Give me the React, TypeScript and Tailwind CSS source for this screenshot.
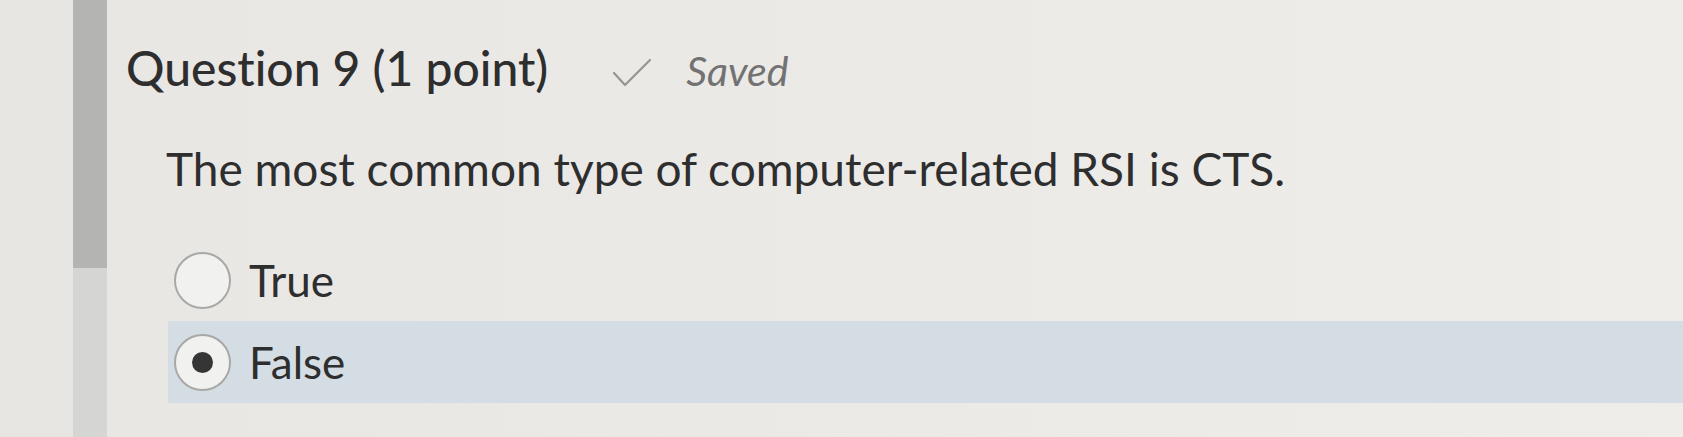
const options = [
  { label: "True", selected: false },
  { label: "False", selected: true },
];

const Radio = ({ checked }: { checked: boolean }) => (
  <span className="flex h-[57px] w-[57px] shrink-0 items-center justify-center rounded-full border-[2px] border-[#a8a8a6] bg-[#f1f1ef]">
    {checked && <span className="h-[21px] w-[21px] rounded-full bg-[#353535]" />}
  </span>
);

const SavedCheck = () => (
  <svg width="40" height="30" viewBox="0 0 40 30" fill="none" className="shrink-0">
    <path d="M2 15 L13 27 L38 2" stroke="#959595" strokeWidth="2.2" strokeLinecap="round" strokeLinejoin="round" />
  </svg>
);

const App = () => {
  return (
    <div className="flex h-[437px] w-full overflow-hidden bg-[#eae9e6] font-['Lato','Liberation_Sans',sans-serif] [font-variant-ligatures:none]">
      <div className="w-[73px] shrink-0 bg-[#e7e6e3]" />

      {/* scrollbar */}
      <div className="flex w-[34px] shrink-0 flex-col bg-[#d5d5d3]">
        <div className="h-[268px] bg-[#b4b4b3]" />
      </div>

      <main className="flex-1 bg-gradient-to-r from-[#e8e7e4] to-[#eeedea] pl-[19px]">
        <div className="flex items-baseline pt-[38px]">
          <h2 className="text-[48px] font-medium leading-[60px] text-[#2e2e2f]">
            Question 9 (1 point)
          </h2>
          <span className="ml-[64px] self-end mb-[13px]">
            <SavedCheck />
          </span>
          <span className="ml-[34px] text-[41px] italic leading-[60px] text-[#727272]">Saved</span>
        </div>

        <p className="ml-[40px] mt-[40px] text-[46px] leading-[56px] text-[#2e2e2f]">
          The most common type of computer-related RSI is CTS.
        </p>

        <div className="ml-[42px] mt-[42px] flex flex-col">
          {options.map((o) => (
            <div
              key={o.label}
              className={`flex h-[82px] items-center pl-[6px] ${o.selected ? "bg-[#d3dde3]" : ""}`}
            >
              <Radio checked={o.selected} />
              <span className="ml-[18px] text-[44px] leading-[56px] text-[#2e2e2f]">{o.label}</span>
            </div>
          ))}
        </div>
      </main>
    </div>
  );
};

export default App;
